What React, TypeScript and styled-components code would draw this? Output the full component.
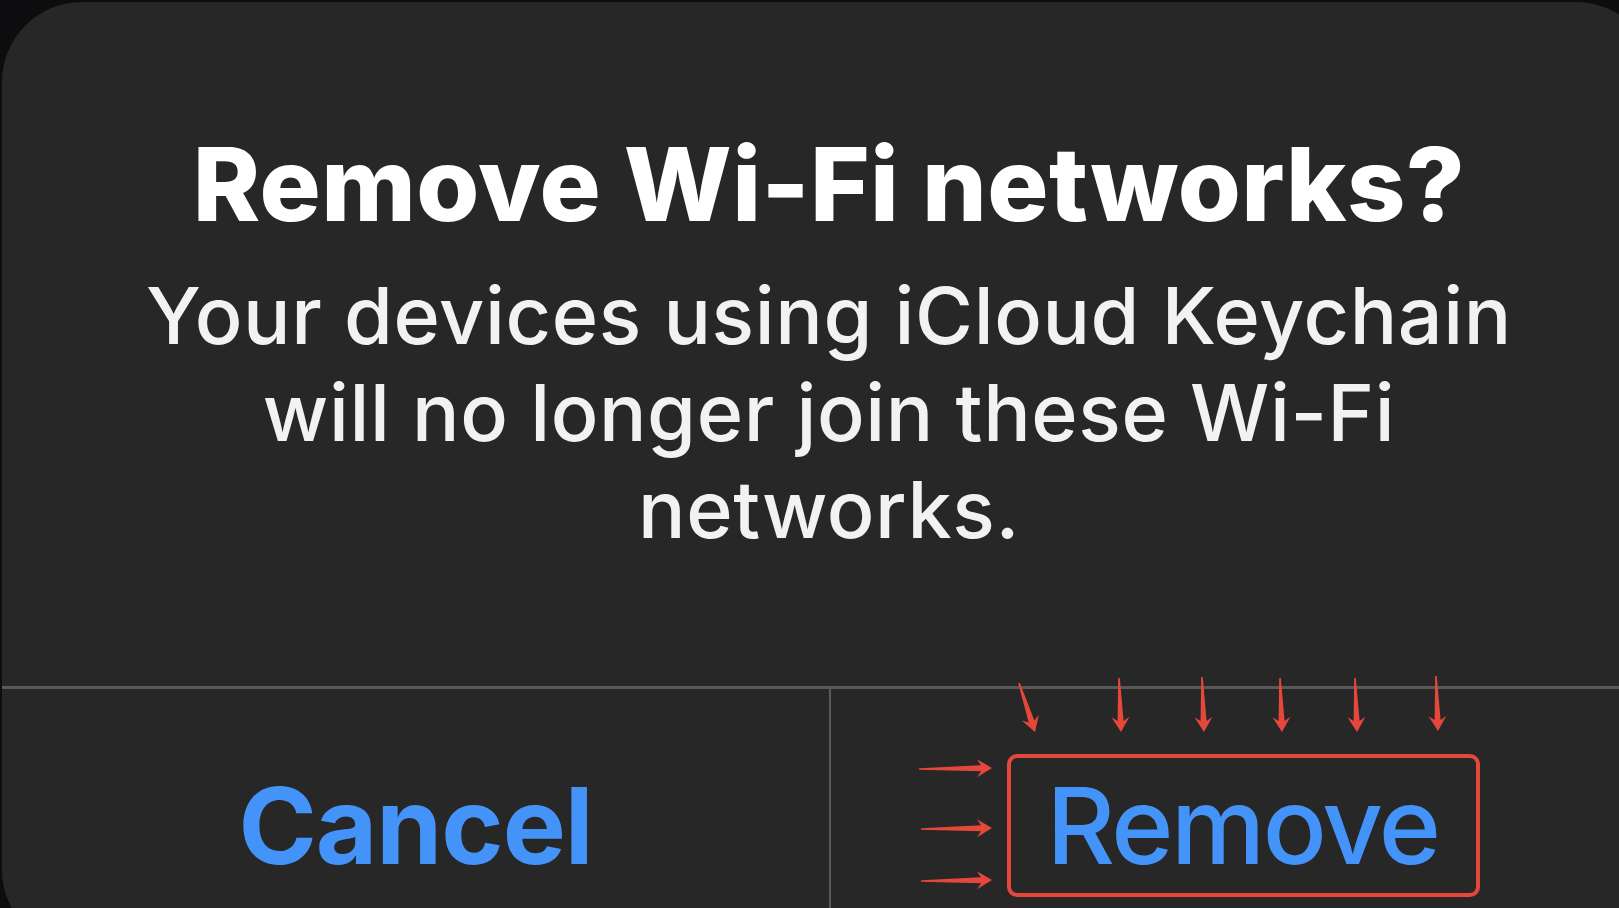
import styled, { createGlobalStyle } from "styled-components";

// ========================================================================================= //
// [ GLOBAL ] ============================================================================== //
// ========================================================================================= //

const GlobalStyle = createGlobalStyle`
  html, body {
    margin: 0;
    height: 100%;
    overflow: hidden;
    background-color: #0d0d0f;
  }
  #root {
    height: 100%;
  }
`;

const fontStack = `"Inter", "Liberation Sans", "Noto Sans", sans-serif`;

// ========================================================================================= //
// [ STYLED COMPONENTS ] =================================================================== //
// ========================================================================================= //

const Page = styled.div`
  padding: 2px 0 0 2px;
  width: 1680px;
`;

const Alert = styled.section`
  display: flex;
  flex-direction: column;
  width: 1654px;
  height: 948px;
  border-radius: 80px;
  background-color: #272727;
  font-family: ${fontStack};
  overflow: hidden;
`;

const Content = styled.div`
  display: flex;
  flex-direction: column;
  align-items: center;
  gap: 22px;
  padding: 121px 0 128px;
  text-align: center;
`;

const Title = styled.h1`
  margin: 0;
  font-size: 102px;
  line-height: 122px;
  font-weight: 800;
  color: #ffffff;
  letter-spacing: 0.4px;
`;

const Message = styled.p`
  margin: 0;
  width: 1420px;
  font-size: 79px;
  line-height: 97px;
  font-weight: 500;
  color: #f2f2f2;
  letter-spacing: 0.6px;
`;

const Actions = styled.div`
  display: grid;
  grid-template-columns: 827px 2px 1fr;
  flex: 1;
  border-top: 3px solid #595959;
`;

const Separator = styled.div`
  background-color: #595959;
`;

const ActionCell = styled.div`
  position: relative;
  display: flex;
  justify-content: center;
  align-items: flex-start;
  padding-top: 84px;
`;

const ActionButton = styled.button<{ $bold?: boolean; $highlight?: boolean }>`
  margin: ${(p) => (p.$highlight ? "-19px 0 0" : "0")};
  padding: ${(p) => (p.$highlight ? "15px 38px 14px 36px" : "0")};
  border: ${(p) => (p.$highlight ? "4px solid #e5483a" : "none")};
  border-radius: 10px;
  background: transparent;
  font-family: ${fontStack};
  font-size: 106px;
  line-height: 106px;
  font-weight: ${(p) => (p.$bold ? 700 : 500)};
  letter-spacing: ${(p) => (p.$bold ? "-1px" : "-2.5px")};
  color: #4493f8;
  cursor: pointer;
`;

const Annotation = styled.svg`
  position: absolute;
  top: -14px;
  left: 0;
  width: 100%;
  height: 220px;
  pointer-events: none;
  overflow: visible;
`;

// ========================================================================================= //
// [ ARROWS ] ============================================================================== //
// ========================================================================================= //

type Arrow = [number, number, number, number];

// start x, start y, tip x, tip y (relative to the Remove cell, y offset by 14)
const arrows: Arrow[] = [
  [188, 8, 204, 57],
  [288, 3, 290, 57],
  [371, 2, 373, 57],
  [449, 3, 451, 57],
  [524, 3, 526, 57],
  [605, 1, 607, 56],
  [88, 94, 161, 93],
  [90, 154, 161, 153],
  [90, 206, 161, 205],
];

const arrowPoints = ([sx, sy, tx, ty]: Arrow) => {
  const len = Math.hypot(tx - sx, ty - sy);
  const dx = (tx - sx) / len;
  const dy = (ty - sy) / len;
  const nx = -dy;
  const ny = dx;
  const bx = tx - dx * 15;
  const by = ty - dy * 15;
  const pts = [
    [sx + nx * 0.8, sy + ny * 0.8],
    [bx + dx * 4 + nx * 3, by + dy * 4 + ny * 3],
    [bx + nx * 9, by + ny * 9],
    [tx, ty],
    [bx - nx * 9, by - ny * 9],
    [bx + dx * 4 - nx * 3, by + dy * 4 - ny * 3],
    [sx - nx * 0.8, sy - ny * 0.8],
  ];
  return pts.map((p) => p.map((v) => v.toFixed(1)).join(",")).join(" ");
};

// ========================================================================================= //
// [ EXPORTED COMPONENT ] ================================================================== //
// ========================================================================================= //

export default function App() {
  return (
    <>
      <GlobalStyle />
      <Page>
        <Alert>
          <Content>
            <Title>Remove Wi-Fi networks?</Title>
            <Message>
              Your devices using iCloud Keychain will no longer join these Wi-Fi networks.
            </Message>
          </Content>
          <Actions>
            <ActionCell>
              <ActionButton $bold>Cancel</ActionButton>
            </ActionCell>
            <Separator />
            <ActionCell>
              <Annotation>
                {arrows.map((a, i) => (
                  <polygon key={i} points={arrowPoints(a)} fill="#e5483a" />
                ))}
              </Annotation>
              <ActionButton $highlight>Remove</ActionButton>
            </ActionCell>
          </Actions>
        </Alert>
      </Page>
    </>
  );
}
